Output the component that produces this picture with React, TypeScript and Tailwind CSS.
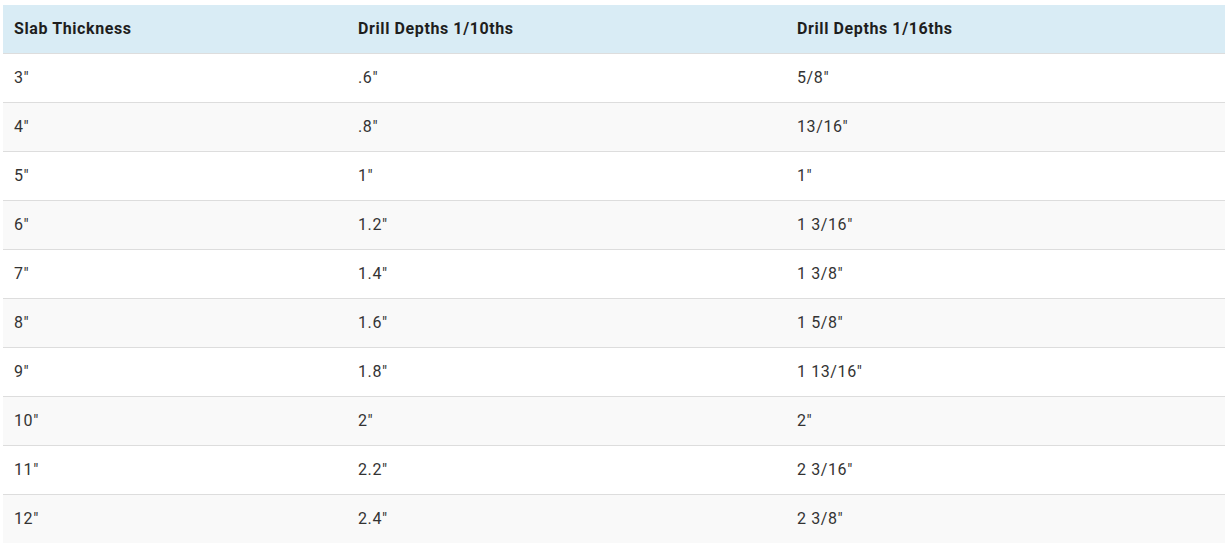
const rows = [
  ["3″", ".6″", "5/8″"],
  ["4″", ".8″", "13/16″"],
  ["5″", "1″", "1″"],
  ["6″", "1.2″", "1 3/16″"],
  ["7″", "1.4″", "1 3/8″"],
  ["8″", "1.6″", "1 5/8″"],
  ["9″", "1.8″", "1 13/16″"],
  ["10″", "2″", "2″"],
  ["11″", "2.2″", "2 3/16″"],
  ["12″", "2.4″", "2 3/8″"],
];

export default function App() {
  return (
    <div className="bg-white pt-[5px] pl-[3px] font-['Roboto',sans-serif]">
      <table className="w-[1222px] border-collapse text-[16px] tracking-[0.6px] text-[#333]">
        <colgroup>
          <col className="w-[344px]" />
          <col className="w-[439px]" />
          <col className="w-[439px]" />
        </colgroup>
        <thead>
          <tr className="h-[48px] bg-[#d9ecf5]">
            <th className="px-[11px] text-left font-bold text-[#1e1e1e]">Slab Thickness</th>
            <th className="px-[11px] text-left font-bold text-[#1e1e1e]">Drill Depths 1/10ths</th>
            <th className="px-[11px] text-left font-bold text-[#1e1e1e]">Drill Depths 1/16ths</th>
          </tr>
        </thead>
        <tbody>
          {rows.map((r, i) => (
            <tr key={i} className={`h-[49px] border-t border-[#dddddd] ${i % 2 === 1 ? "bg-[#f9f9f9]" : "bg-white"}`}>
              {r.map((c, j) => (
                <td key={j} className="px-[11px]">{c}</td>
              ))}
            </tr>
          ))}
        </tbody>
      </table>
    </div>
  );
}
